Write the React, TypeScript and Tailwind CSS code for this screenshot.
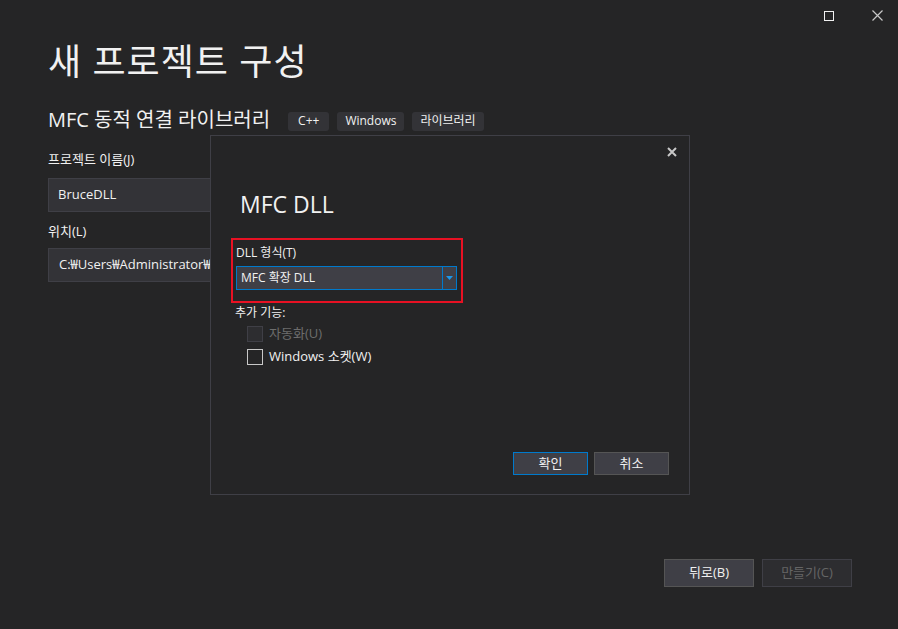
const font = { fontFamily: '"Open Sans", "Noto Sans CJK KR", sans-serif' };

function Checkbox({ disabled, label }: { disabled?: boolean; label: string }) {
  return (
    <div className="flex items-center h-[23px] pl-[12px]">
      <span
        className={
          disabled
            ? "w-[16px] h-[16px] border border-[#3f3f46] bg-[#2d2d30]"
            : "w-[16px] h-[16px] border border-[#c8c8c8] bg-[#252526]"
        }
      />
      <span className={disabled ? "ml-[6px] text-[13px] text-[#6d6d6d]" : "ml-[6px] text-[13px] text-[#f1f1f1]"}>
        {label}
      </span>
    </div>
  );
}

export default function App() {
  return (
    <div className="relative w-[898px] h-[629px] bg-[#252526] text-[#f1f1f1] flex flex-col overflow-hidden" style={font}>
      {/* window controls */}
      <div className="flex justify-end items-center h-[31px] pr-[15px] gap-[38px]">
        <span className="w-[10px] h-[10px] border border-[#f1f1f1]" />
        <svg width="11" height="11" viewBox="0 0 11 11" className="text-[#c8c8c8]">
          <path d="M0.5 0.5 L10.5 10.5 M10.5 0.5 L0.5 10.5" stroke="currentColor" strokeWidth="1.2" />
        </svg>
      </div>

      <div className="pl-[48px]">
        <h1 className="text-[36px] leading-[44px] mt-[9px] tracking-[1px]">새 프로젝트 구성</h1>
        <div className="flex items-center mt-[22px] h-[28px]">
          <span className="text-[20px]">MFC 동적 연결 라이브러리</span>
          <div className="flex gap-[8px] ml-[18px] mt-[2px]">
            <span className="px-[10px] h-[19px] flex items-center rounded-[3px] bg-[#333337] text-[12px]">C++</span>
            <span className="px-[8px] h-[19px] flex items-center rounded-[3px] bg-[#333337] text-[12px]">Windows</span>
            <span className="px-[8px] h-[19px] flex items-center rounded-[3px] bg-[#333337] text-[12px]">라이브러리</span>
          </div>
        </div>

        <div className="mt-[16px] text-[13px] leading-[18px]">프로젝트 이름(J)</div>
        <div className="mt-[10px] w-[460px] h-[34px] bg-[#333337] border border-[#3f3f46] flex items-center pl-[9px] text-[13px]">
          BruceDLL
        </div>
        <div className="mt-[10px] text-[13px] leading-[18px]">위치(L)</div>
        <div className="mt-[8px] w-[460px] h-[34px] bg-[#333337] border border-[#3f3f46] flex items-center pl-[10px] text-[13px]">
          C:₩Users₩Administrator₩source₩repos
        </div>
      </div>

      <div className="mt-auto flex justify-end gap-[8px] pr-[46px] pb-[42px]">
        <button className="w-[90px] h-[28px] bg-[#3f3f46] border border-[#555555] text-[13px] text-[#f1f1f1]">뒤로(B)</button>
        <button className="w-[90px] h-[28px] bg-[#2d2d30] border border-[#3f3f46] text-[13px] text-[#656565]">만들기(C)</button>
      </div>

      {/* modal dialog */}
      <div className="absolute left-[210px] top-[135px] w-[480px] h-[360px] bg-[#252526] border border-[#3f3f46] flex flex-col">
        <div className="flex justify-end pt-[11px] pr-[12px]">
          <svg width="10" height="10" viewBox="0 0 10 10" className="text-[#c8c8c8]">
            <path d="M1 1 L9 9 M9 1 L1 9" stroke="currentColor" strokeWidth="2" />
          </svg>
        </div>
        <div className="pl-[29px] mt-[32px] text-[23px] leading-[30px]">MFC DLL</div>

        <div className="ml-[20px] mt-[19px] w-[232px] h-[65px] border-2 border-[#e81123] pl-[3px] pt-[6px]">
          <div className="text-[12px] leading-[14px]">DLL 형식(T)</div>
          <div className="mt-[6px] w-[221px] h-[24px] bg-[#3f3f46] border border-[#007acc] flex items-center">
            <span className="flex-1 pl-[4px] text-[12px] leading-[14px]">MFC 확장 DLL</span>
            <span className="w-[14px] h-full border-l border-[#007acc] flex items-center justify-center">
              <svg width="7" height="4" viewBox="0 0 7 4">
                <path d="M0 0 H7 L3.5 4 Z" fill="#1c97ea" />
              </svg>
            </span>
          </div>
        </div>

        <div className="pl-[24px] mt-[1px]">
          <div className="text-[12px] leading-[17px]">추가 기능:</div>
          <div className="mt-[1px]">
            <Checkbox disabled label="자동화(U)" />
            <Checkbox label="Windows 소켓(W)" />
          </div>
        </div>

        <div className="mt-auto flex justify-end gap-[6px] pr-[20px] pb-[19px]">
          <button className="w-[75px] h-[23px] bg-[#3f3f46] border border-[#007acc] text-[13px] text-[#f1f1f1]">확인</button>
          <button className="w-[75px] h-[23px] bg-[#3f3f46] border border-[#555555] text-[13px] text-[#f1f1f1]">취소</button>
        </div>
      </div>
    </div>
  );
}
